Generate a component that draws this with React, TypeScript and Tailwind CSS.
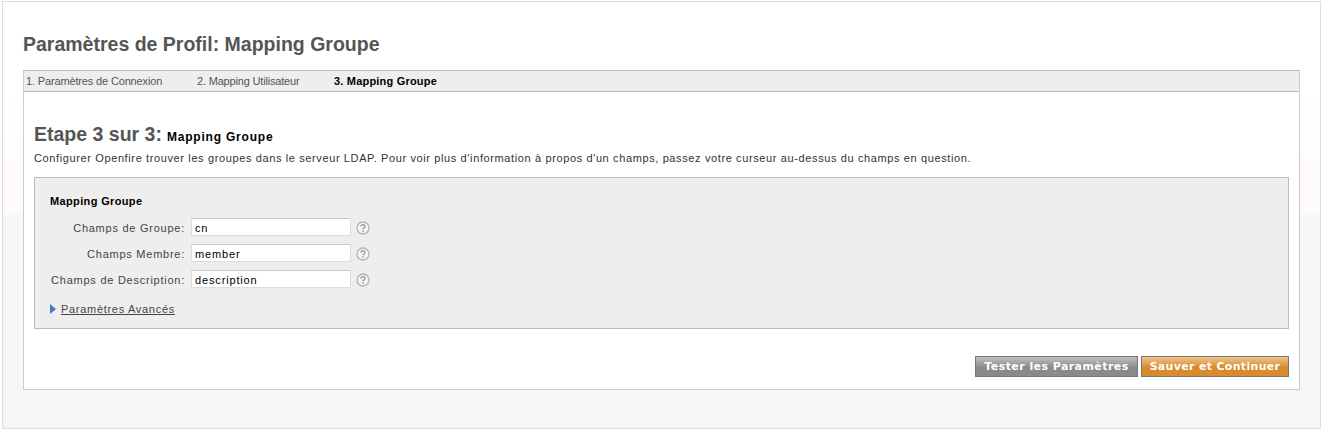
const font = "font-['Liberation_Sans',Arial,sans-serif]";

const fields = [
  { label: "Champs de Groupe:", value: "cn" },
  { label: "Champs Membre:", value: "member" },
  { label: "Champs de Description:", value: "description" },
];

function HelpIcon() {
  return (
    <svg width="14" height="14" viewBox="0 0 14 14" className="shrink-0">
      <circle cx="7" cy="7" r="6" fill="#f4f4f4" stroke="#b4b4b4" strokeWidth="1.3" />
      <path d="M5 5.6c0-1.2.9-1.9 2-1.9s2 .7 2 1.7c0 1.4-2 1.5-2 2.9" fill="none" stroke="#a0a0a0" strokeWidth="1.4" />
      <rect x="6.2" y="9.3" width="1.6" height="1.5" fill="#a0a0a0" />
    </svg>
  );
}

export default function App() {
  return (
    <div className={`${font} pl-[2px] pt-px pr-[3px] pb-[2px] bg-white h-[431px] w-[1324px]`}>
      <div className="h-[428px] border border-[#dddddd] bg-[linear-gradient(to_bottom,#ffffff_0,#ffffff_90px,#fff9fc_212px,#f6f6f6_213px,#f6f6f6_100%)] pt-[32px] px-5">
        <h1 className="text-[19.5px] leading-[20px] font-bold text-[#555555]">Paramètres de Profil: Mapping Groupe</h1>

        <div className="mt-[16px] w-[1277px] h-[320px] border border-[#cccccc] border-t-[#bbbbbb] bg-white flex flex-col">
          <div className="h-[21px] shrink-0 bg-[#eeeeee] border-b border-[#bbbbbb] flex items-center pl-[2px] text-[11px] text-[#555555]">
            <span className="w-[171px] tracking-[-0.15px]">1. Paramètres de Connexion</span>
            <span className="w-[137px] tracking-[-0.18px]">2. Mapping Utilisateur</span>
            <span className="font-bold text-black tracking-[0.2px]">3. Mapping Groupe</span>
          </div>

          <div className="px-[10px] pt-[31px]">
            <div className="flex items-baseline gap-[5px]">
              <h2 className="text-[19.5px] leading-[22px] font-bold text-[#555555]">Etape 3 sur 3:</h2>
              <span className="text-[12px] font-bold text-black tracking-[0.8px]">Mapping Groupe</span>
            </div>
            <p className="mt-[4px] text-[11px] leading-[16px] text-[#333333] tracking-[0.62px]">
              Configurer Openfire trouver les groupes dans le serveur LDAP. Pour voir plus d'information à propos d'un champs, passez votre curseur au-dessus du champs en question.
            </p>

            <div className="mt-[11px] w-[1255px] h-[152px] border border-[#bbbbbb] bg-[#eeeeee] pl-[15px] pt-[16px]">
              <div className="text-[11px] leading-[14px] font-bold text-black tracking-[0.36px]">Mapping Groupe</div>
              <div className="mt-[10px] flex flex-col gap-[6px]">
                {fields.map((f) => (
                  <div key={f.label} className="flex items-center h-[20px]">
                    <label className="w-[135px] text-right text-[11px] text-[#444444] tracking-[0.75px]">{f.label}</label>
                    <input
                      readOnly
                      value={f.value}
                      className="self-start ml-[6px] w-[160px] h-[18px] border border-[#dcdce6] border-t-[#c8c8d0] bg-white px-[3px] pt-px text-[11px] text-black tracking-[0.85px] font-['Liberation_Sans',Arial,sans-serif] outline-none"
                    />
                    <span className="ml-[5px]"><HelpIcon /></span>
                  </div>
                ))}
              </div>
              <div className="mt-[12px] flex items-center h-[14px]">
                <svg width="6" height="10" viewBox="0 0 6 10" className="shrink-0">
                  <path d="M0 0l6 5-6 5z" fill="#3f7cb8" />
                </svg>
                <a className="ml-[5px] text-[11px] text-[#444444] underline tracking-[0.7px]">Paramètres Avancés</a>
              </div>
            </div>

            <div className="mt-[27px] flex justify-end gap-[3px] w-[1255px]">
              <button className="h-[21px] w-[163px] pt-[2px] border border-[#777777] bg-[linear-gradient(to_bottom,#c0c0c0,#8a8b87_55%)] text-[11px] font-bold text-white tracking-[0.43px] font-['DejaVu_Sans',sans-serif]">
                Tester les Paramètres
              </button>
              <button className="h-[21px] w-[148px] pt-[2px] border border-[#777777] bg-[linear-gradient(to_bottom,#f0c48c,#d98a2b_55%)] text-[11px] font-bold text-white tracking-[0.32px] font-['DejaVu_Sans',sans-serif]">
                Sauver et Continuer
              </button>
            </div>
          </div>
        </div>
      </div>
    </div>
  );
}
